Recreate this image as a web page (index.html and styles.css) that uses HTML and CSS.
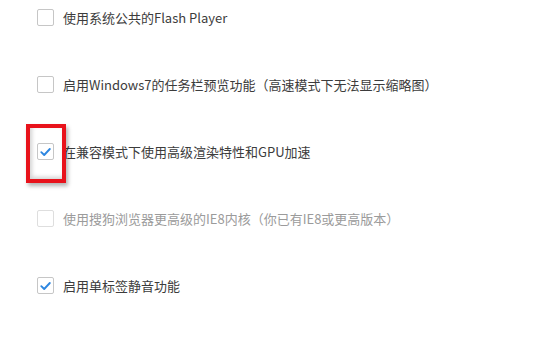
FILE: index.html
```html
<!DOCTYPE html>
<html lang="zh-CN">
<head>
    <meta charset="UTF-8">
    <title>高级设置</title>
    <link rel="stylesheet" href="styles.css">
</head>
<body>
    <div class="panel">
        <ul class="options">
            <li class="option">
                <span class="box"></span>
                <span class="label">使用系统公共的Flash Player</span>
            </li>
            <li class="option">
                <span class="box"></span>
                <span class="label">启用Windows7的任务栏预览功能（高速模式下无法显示缩略图）</span>
            </li>
            <li class="option">
                <span class="box checked">
                    <svg viewBox="0 0 16 16" width="16" height="16"><path d="M3.5 8.2 L6.6 11.2 L12.6 4.8" fill="none" stroke="#2d86e0" stroke-width="2" stroke-linecap="round" stroke-linejoin="round"/></svg>
                </span>
                <span class="label">在兼容模式下使用高级渲染特性和GPU加速</span>
            </li>
            <li class="option disabled">
                <span class="box"></span>
                <span class="label">使用搜狗浏览器更高级的IE8内核（你已有IE8或更高版本）</span>
            </li>
            <li class="option">
                <span class="box checked">
                    <svg viewBox="0 0 16 16" width="16" height="16"><path d="M3.5 8.2 L6.6 11.2 L12.6 4.8" fill="none" stroke="#2d86e0" stroke-width="2" stroke-linecap="round" stroke-linejoin="round"/></svg>
                </span>
                <span class="label">启用单标签静音功能</span>
            </li>
        </ul>
        <div class="highlight"></div>
    </div>
</body>
</html>
```

FILE: styles.css
```css
body {
    margin: 0;
    background: #ffffff;
    font-family: "Noto Sans CJK SC", "Noto Sans", sans-serif;
}
.panel {
    position: relative;
    width: 550px;
    height: 340px;
    overflow: hidden;
}
.options {
    list-style: none;
    margin: 0;
    padding: 9px 0 0 37px;
    display: flex;
    flex-direction: column;
    gap: 50px;
}
.option {
    display: flex;
    align-items: center;
    height: 17px;
    color: #3c3c3c;
    font-size: 13px;
}
.box {
    box-sizing: border-box;
    width: 17px;
    height: 17px;
    border: 1px solid #c6c6c6;
    border-radius: 2px;
    background: #fff;
    margin-right: 9px;
    display: flex;
    align-items: center;
    justify-content: center;
    flex-shrink: 0;
}
.label {
    white-space: nowrap;
    line-height: 17px;
}
.disabled {
    color: #9b9b9b;
}
.disabled .box {
    border-color: #dedede;
}
.highlight {
    position: absolute;
    left: 26px;
    top: 124px;
    width: 40px;
    height: 59px;
    box-sizing: border-box;
    border: 4px solid #e8121b;
    box-shadow: 2px 3px 4px rgba(0, 0, 0, 0.3), inset 2px -2px 4px rgba(0, 0, 0, 0.18);
}
```
